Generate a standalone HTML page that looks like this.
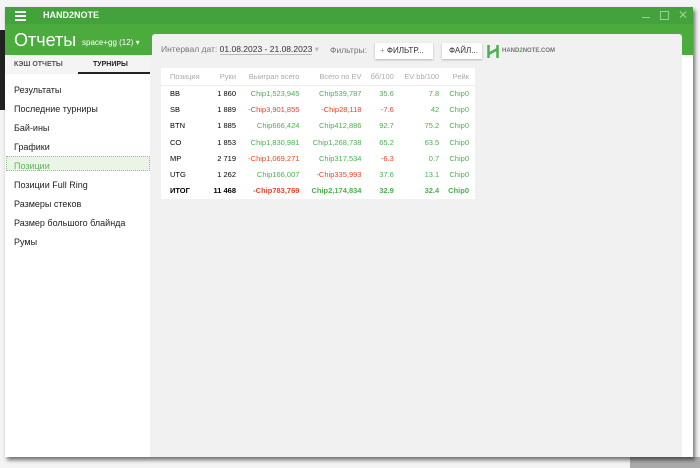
<!DOCTYPE html><html><head><meta charset="utf-8"><style>
*{margin:0;padding:0;box-sizing:border-box}
body{width:700px;height:468px;background:#f4f4f4;position:relative;overflow:hidden;font-family:"Liberation Sans",sans-serif}
.abs{position:absolute}
.win{left:5px;top:7px;width:688px;height:450px;background:#fff;box-shadow:2px 3px 4px rgba(0,0,0,.55)}
.tb{left:0;top:0;width:688px;height:17px;background:#43a23b}
.hd{left:0;top:17px;width:688px;height:31px;background:#4bac3d}
.side{left:0;top:48px;width:145px;height:402px;background:#fff}
.main{left:145px;top:48px;width:532px;height:402px;background:#f1f1f1}
.panel{left:147px;top:27px;width:530px;height:22px;background:#f1f1f1;border-radius:3px 3px 0 0}
.mi{position:absolute;left:9px;font-size:9px;color:#222}
table{border-collapse:collapse;font-size:7.5px}
td{height:16.3px;text-align:right;padding-right:6px;white-space:nowrap}
th{height:17px;font-weight:normal;color:#aaa;text-align:right;padding-right:6px;border-bottom:1px solid #eee}
.g{color:#4caf50}.r{color:#e5452a}
td:first-child,th:first-child{text-align:left;padding-left:9px}
</style></head><body>
<div class="abs" style="left:0;top:30px;width:5px;height:80px;background:#222"></div>
<div class="abs" style="left:630px;top:457px;width:70px;height:11px;background:#aaa"></div>
<div class="abs win">
<div class="abs tb">
<div class="abs" style="left:10px;top:4px;width:11px;height:2px;background:#fff;box-shadow:0 4px #fff,0 8px #fff"></div>
<div class="abs" style="left:38px;top:3px;font-size:9px;font-weight:bold;color:#fff">HAND2NOTE</div>
<div class="abs" style="left:637px;top:10px;width:8px;height:1px;background:#9bd090"></div>
<div class="abs" style="left:655px;top:4px;width:9px;height:9px;border:1px solid #9bd090"></div>
<div class="abs" style="left:673px;top:1px;color:#9bd090;font-size:12px">✕</div>
</div>
<div class="abs hd">
<div class="abs" style="left:9px;top:6px;font-size:18px;color:#fff">Отчеты</div>
<div class="abs" style="left:77px;top:14px;font-size:8px;color:#fff">space+gg (12) ▾</div>
</div>
<div class="abs side">
<div class="abs" style="left:0;top:0;width:145px;height:19px;background:#f4f4f4"></div>
<div class="abs" style="left:9px;top:6px;font-size:7px;color:#555;font-weight:bold">КЭШ ОТЧЕТЫ</div>
<div class="abs" style="left:88px;top:6px;font-size:7px;color:#222;font-weight:bold">ТУРНИРЫ</div>
<div class="abs" style="left:73px;top:17px;width:72px;height:2px;background:#222"></div>
<div class="mi" style="top:30px">Результаты</div>
<div class="mi" style="top:49px">Последние турниры</div>
<div class="mi" style="top:68px">Бай-ины</div>
<div class="mi" style="top:87px">Графики</div>
<div class="abs" style="left:1px;top:101px;width:144px;height:15px;background:#eaf5e8;border:1px dotted #8bc483"></div>
<div class="mi" style="top:106px;color:#5cb85c">Позиции</div>
<div class="mi" style="top:125px">Позиции Full Ring</div>
<div class="mi" style="top:144px">Размеры стеков</div>
<div class="mi" style="top:163px">Размер большого блайнда</div>
<div class="mi" style="top:182px">Румы</div>
</div>
<div class="abs main"></div>
<div class="abs panel"></div>
<div class="abs" style="left:156px;top:37px;font-size:8.5px;color:#777">Интервал дат: <span style="color:#333;border-bottom:1px solid #bbb">01.08.2023 - 21.08.2023</span> <span style="color:#bbb">▾</span></div>
<div class="abs" style="left:325px;top:38px;font-size:8.5px;color:#777">Фильтры:</div>
<div class="abs" style="left:370px;top:36px;width:58px;height:16px;background:#fff;box-shadow:0 1px 2px rgba(0,0,0,.25);font-size:8px;color:#333;padding:3px 0 0 5px"><span style="color:#999">+</span> ФИЛЬТР...</div>
<div class="abs" style="left:437px;top:36px;width:40px;height:16px;background:#fff;box-shadow:0 1px 2px rgba(0,0,0,.25);font-size:8px;color:#333;padding:3px 0 0 7px">ФАЙЛ...</div>
<svg class="abs" style="left:482px;top:38px" width="12" height="13"><path d="M1.5 0V13M10.5 0V13M1.5 9L10.5 4" stroke="#4caf50" stroke-width="2.5" fill="none"/></svg>
<div class="abs" style="left:497px;top:41px;font-size:6px;color:#777;font-weight:bold">HAND<span style="color:#4caf50">2</span>NOTE.COM</div>
<div class="abs" style="left:156px;top:61px;width:314px;height:131px;background:#fff">
<table style="width:314px">
<tr><th>Позиция</th><th>Руки</th><th>Выиграл всего</th><th>Всего по EV</th><th>бб/100</th><th>EV bb/100</th><th>Рейк</th></tr>
<tr><td>BB</td><td>1 860</td><td class="g">Chip1,523,945</td><td class="g">Chip539,787</td><td class="g">35.6</td><td class="g">7.8</td><td class="g">Chip0</td></tr>
<tr><td>SB</td><td>1 889</td><td class="r">-Chip3,901,855</td><td class="r">-Chip28,118</td><td class="r">-7.6</td><td class="g">42</td><td class="g">Chip0</td></tr>
<tr><td>BTN</td><td>1 885</td><td class="g">Chip666,424</td><td class="g">Chip412,886</td><td class="g">92.7</td><td class="g">75.2</td><td class="g">Chip0</td></tr>
<tr><td>CO</td><td>1 853</td><td class="g">Chip1,830,981</td><td class="g">Chip1,268,738</td><td class="g">65.2</td><td class="g">63.5</td><td class="g">Chip0</td></tr>
<tr><td>MP</td><td>2 719</td><td class="r">-Chip1,069,271</td><td class="g">Chip317,534</td><td class="r">-6.3</td><td class="g">0.7</td><td class="g">Chip0</td></tr>
<tr><td>UTG</td><td>1 262</td><td class="g">Chip166,007</td><td class="r">-Chip335,993</td><td class="g">37.6</td><td class="g">13.1</td><td class="g">Chip0</td></tr>
<tr style="font-weight:bold"><td>ИТОГ</td><td>11 468</td><td class="r">-Chip783,769</td><td class="g">Chip2,174,834</td><td class="g">32.9</td><td class="g">32.4</td><td class="g">Chip0</td></tr>
</table></div>
</div>
</body></html>
